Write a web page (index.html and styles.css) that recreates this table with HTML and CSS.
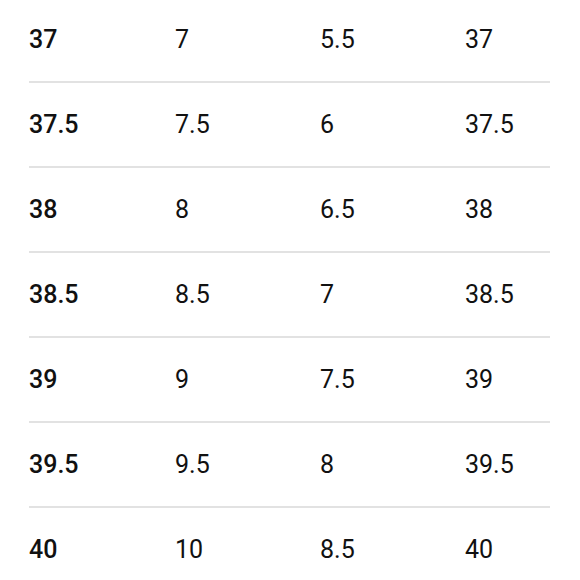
FILE: index.html
```html
<!DOCTYPE html>
<html>
<head>
<meta charset="utf-8">
<link rel="stylesheet" href="styles.css">
</head>
<body>
<div class="table">
  <div class="row"><span class="size">37</span><span>7</span><span>5.5</span><span>37</span></div>
  <div class="row"><span class="size">37.5</span><span>7.5</span><span>6</span><span>37.5</span></div>
  <div class="row"><span class="size">38</span><span>8</span><span>6.5</span><span>38</span></div>
  <div class="row"><span class="size">38.5</span><span>8.5</span><span>7</span><span>38.5</span></div>
  <div class="row"><span class="size">39</span><span>9</span><span>7.5</span><span>39</span></div>
  <div class="row"><span class="size">39.5</span><span>9.5</span><span>8</span><span>39.5</span></div>
  <div class="row"><span class="size">40</span><span>10</span><span>8.5</span><span>40</span></div>
</div>
</body>
</html>
```
FILE: styles.css
```css
html, body {
  margin: 0;
  padding: 0;
  background: #ffffff;
  overflow: hidden;
}
.table {
  margin: -2px 30px 0 29px;
  font-family: Roboto, "Noto Sans", sans-serif;
  font-size: 25px;
  color: #111111;
}
.row {
  display: grid;
  grid-template-columns: 146px 145px 145px 1fr;
  align-items: center;
  height: 83px;
  border-bottom: 2px solid #e2e2e2;
}
.row span {
  line-height: 82px;
}
.size {
  font-weight: 500;
}
```
